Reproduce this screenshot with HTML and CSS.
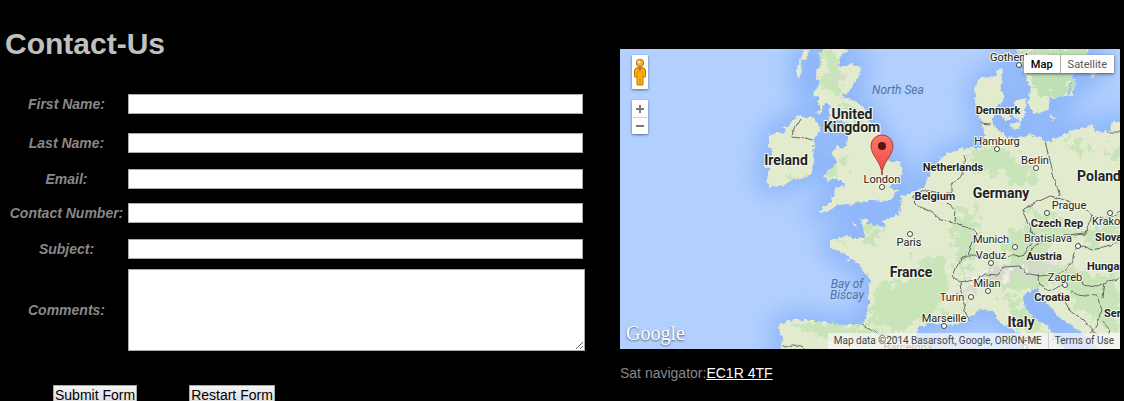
FILE: index.html
```html
<!DOCTYPE html>
<html lang="en">
<head>
<meta charset="utf-8">
<title>Contact-Us</title>
<link rel="stylesheet" href="styles.css">
</head>
<body>
<main class="page">
  <section class="contact">
    <h1 class="title">Contact-Us</h1>
    <form class="form">
      <div class="fields">
        <label class="label" for="first">First Name:</label><input class="field" id="first" type="text">
        <label class="label" for="last">Last Name:</label><input class="field" id="last" type="text">
        <label class="label" for="email">Email:</label><input class="field" id="email" type="email">
        <label class="label" for="phone">Contact Number:</label><input class="field" id="phone" type="tel">
        <label class="label" for="subject">Subject:</label><input class="field" id="subject" type="text">
        <label class="label" for="comments">Comments:</label><textarea class="field comments" id="comments"></textarea>
      </div>
      <div class="actions">
        <button class="button" type="submit">Submit Form</button>
        <button class="button" type="reset">Restart Form</button>
      </div>
    </form>
  </section>
  <section class="location">
    <div class="map">
      <svg class="canvas" viewBox="620 49 500 300" role="img" aria-label="Map of western Europe">
        <defs>
          <filter id="rough" x="-5%" y="-5%" width="110%" height="110%">
            <feTurbulence type="fractalNoise" baseFrequency="0.22" numOctaves="3" seed="4" result="n"/>
            <feDisplacementMap in="SourceGraphic" in2="n" scale="6" xChannelSelector="R" yChannelSelector="G"/>
          </filter>
          <filter id="bend" x="-5%" y="-5%" width="110%" height="110%">
            <feTurbulence type="fractalNoise" baseFrequency="0.12" numOctaves="2" seed="4" result="n"/>
            <feDisplacementMap in="SourceGraphic" in2="n" scale="5" xChannelSelector="R" yChannelSelector="G"/>
          </filter>
          <filter id="patchy" x="-10%" y="-10%" width="120%" height="120%">
            <feTurbulence type="fractalNoise" baseFrequency="0.09" numOctaves="4" seed="9" result="n"/>
            <feDisplacementMap in="SourceGraphic" in2="n" scale="30" xChannelSelector="R" yChannelSelector="G"/>
            <feGaussianBlur stdDeviation="0.6"/>
          </filter>
          <filter id="soft" x="-20%" y="-20%" width="140%" height="140%"><feGaussianBlur stdDeviation="11"/></filter>
          <linearGradient id="pin" x1="0" y1="0" x2="0" y2="1"><stop offset="0" stop-color="#ff776b"/><stop offset="1" stop-color="#e8463c"/></linearGradient>
          <g id="land">
            <path d="M828 45L818 55L822 62L815 72L820 82L813 95L819 98L819 110L815 114L821 112L826 103L831 104L828 119L834 122L843 120L848 135L847 148L838 147L832 153L837 162L832 169L823 175L828 181L840 179L845 186L835 187L832 199L826 206L818 212L827 213L837 205L853 204L870 200L890 201L898 190L888 188L894 184L903 172L901 163L888 160L886 146L880 132L870 122L865 108L852 100L840 97L848 93L858 78L862 67L852 64L840 67L838 60L848 49Z"/>
            <path d="M787 127L797 117L813 117L820 128L813 142L814 162L810 175L793 180L777 188L765 183L770 170L764 165L773 152L768 145L770 134L785 132L783 127Z"/>
            <path d="M803 50L809 50L806 59L801 61L802 72L799 79L797 68L801 59Z"/>
            <path d="M901 197L899 215L883 220L884 227L867 224L867 220L861 219L865 238L852 238L848 235L830 240L830 248L843 253L858 263L869 278L869 305L863 324L843 324L797 319L782 323L778 328L782 338L780 355L916 355L917 338L918 327L930 323L950 326L967 322L980 309L993 310L1000 323L1022 334L1032 355L1072 355L1053 338L1050 328L1033 318L1025 307L1023 295L1038 287L1042 298L1060 318L1083 333L1105 355L1130 355L1130 122L1112 122L1110 131L1095 132L1093 125L1073 130L1047 143L1038 137L1030 135L1020 138L1007 137L993 125L993 112L1005 97L1000 88L1003 77L1002 67L993 77L980 78L975 88L977 112L982 125L987 145L978 148L965 148L950 152L939 160L927 178L923 188L908 194Z"/>
            <path d="M1015 45L1022 65L1030 88L1028 105L1033 113L1047 112L1050 98L1067 97L1072 78L1082 65L1090 45Z"/>
            <path d="M1014 101L1026 98L1025 112L1022 121L1014 118ZM1002 112L1010 111L1011 120L1004 121ZM1009 124L1020 122L1019 128L1010 127ZM1050 115L1056 118L1052 121ZM1073 79L1076 78L1073 95L1069 97ZM1090 70L1096 65L1098 73L1092 78ZM853 223L857 223L857 228ZM846 259L850 260L848 262Z"/>
          </g>
          <mask id="shore" maskUnits="userSpaceOnUse" x="600" y="30" width="540" height="340"><use href="#land" fill="#fff"/></mask>
        </defs>
        <rect x="620" y="49" width="500" height="300" fill="#b2d0ff"/>
        <g filter="url(#soft)" stroke="#83aef8" stroke-width="18" fill="#83aef8" opacity=".75"><use href="#land"/></g>
        <g filter="url(#rough)">
          <use href="#land" fill="#e3ebcf"/>
          <g mask="url(#shore)">
            <g fill="#c9e4b9" filter="url(#patchy)">
              <path d="M820 50L843 55L838 90L825 98ZM843 98L862 110L858 126L843 118ZM827 159L842 158L842 174L830 175ZM865 225L882 228L883 245L868 245ZM834 241L850 242L848 250ZM872 290L900 282L930 260L952 278L945 310L900 330L872 325ZM905 254L912 252L910 262ZM920 263L945 256L949 280L930 287ZM965 150L1000 150L1035 170L1036 184L1005 178L975 168ZM952 215L978 205L975 255L957 275ZM1000 235L1030 225L1050 240L1045 265L1020 280ZM990 270L1045 260L1060 283L1020 291L990 283ZM1050 270L1120 275L1118 330L1090 320ZM1000 300L1018 296L1048 338L1030 336ZM785 322L860 325L905 338L850 343L810 332ZM1090 225L1120 215L1120 240L1080 244ZM1060 140L1090 142L1083 153ZM1100 148L1120 152L1120 164ZM1022 202L1055 220L1082 235L1040 238ZM780 175L796 173L783 184Z"/>
              <path fill="#bfe0b5" d="M1010 45L1090 45L1065 100L1035 90L1020 65Z"/>
            </g>
            <g fill="#d5d8cd" filter="url(#patchy)" opacity=".8"><path d="M836 74L850 73L849 84L838 82ZM962 276L990 268L1040 260L1065 266L1030 276L1000 280L970 295L966 315Z"/></g>
            <g fill="#f3f4e8" filter="url(#patchy)" opacity=".8"><path d="M966 275L985 272L982 278L965 290ZM1000 268L1022 266L1018 272L1000 275Z"/></g>
          </g>
        </g>
        <g class="borders" filter="url(#bend)">
          <path d="M801 119L793 132L792 137L801 138L805 137L812 139M981 123L991 124M1045 142L1050 160L1054 177L1060 196M965 155L963 175L952 184L952 193L940 193L925 190L913 197L918 206L930 211L941 220L950 221L956 223L977 232L969 256L960 259L953 276L961 283L963 300L966 314L970 321"/>
          <path d="M949 203L956 211L955 220M969 256L1000 257L1023 255L1028 248L1035 238L1022 210L1035 203L1050 196L1065 200L1078 206L1092 215L1085 233L1068 235L1055 238L1036 244L1030 252M961 283L973 280L986 274L998 275L1004 267L1020 266L1025 273L1040 276L1060 274L1070 265L1074 257L1077 244L1092 250L1112 246L1122 238M1038 274L1040 285L1051 291L1065 283L1078 272L1083 284L1098 286L1108 281L1122 278M1070 292L1084 295L1097 296L1102 310L1096 325L1090 334M1060 292L1069 309L1084 321L1098 336M1107 132L1122 132M1104 282L1102 297M863 325L880 333L902 341M782 346L795 345L807 350M1102 321L1110 330L1105 345M1092 215L1107 219L1122 210"/>
        </g>
        <g class="rings">
          <circle cx="882" cy="187" r="2.5"/><circle cx="910" cy="234" r="2.5"/><circle cx="1019" cy="65" r="2.5"/><circle cx="997" cy="149" r="2.5"/><circle cx="1036" cy="168" r="2.5"/><circle cx="1047" cy="213" r="2.5"/><circle cx="1110" cy="213" r="2.5"/><circle cx="1015" cy="247" r="2.5"/><circle cx="1078" cy="246" r="2.5"/><circle cx="991" cy="263" r="2.5"/><circle cx="988" cy="291" r="2.5"/><circle cx="971" cy="297" r="2.5"/><circle cx="1065" cy="285" r="2.5"/><circle cx="944" cy="326" r="2.5"/><circle cx="1025" cy="347" r="2.5"/>
        </g>
        <g class="sea"><text x="898" y="94">North Sea</text><text x="847" y="288">Bay of</text><text x="847" y="299">Biscay</text></g>
        <g class="nation">
          <text x="852" y="119">United</text><text x="852" y="132">Kingdom</text><text x="786" y="165">Ireland</text><text x="911" y="277">France</text><text x="1001" y="198">Germany</text><text x="1099" y="181">Poland</text><text x="1021" y="327">Italy</text>
        </g>
        <g class="country">
          <text x="998" y="114">Denmark</text><text x="953" y="171">Netherlands</text><text x="935" y="200">Belgium</text><text x="1057" y="227">Czech Rep</text><text x="1044" y="260">Austria</text><text x="1052" y="301">Croatia</text><text class="start" x="1095" y="241">Slovakia</text><text class="start" x="1087" y="270">Hungary</text><text class="start" x="1104" y="317">Serbia</text>
        </g>
        <g class="city">
          <text x="882" y="183">London</text><text x="909" y="246">Paris</text><text class="start" x="990" y="61">Gothenburg</text><text x="997" y="145">Hamburg</text><text x="1035" y="164">Berlin</text><text x="1069" y="209">Prague</text><text class="start" x="1092" y="225">Krakow</text><text x="991" y="243">Munich</text><text x="1048" y="242">Bratislava</text><text x="991" y="259">Vaduz</text><text x="987" y="287">Milan</text><text x="952" y="301">Turin</text><text x="1065" y="281">Zagreb</text><text x="944" y="322">Marseille</text><text x="908" y="351">Barcelona</text><text x="1025" y="343">Rome</text>
        </g>
        <path d="M882 175C882 162 871 156 871 146A11 11 0 0 1 893 146C893 156 882 162 882 175Z" fill="url(#pin)" stroke="#b83a32" stroke-width="1"/>
        <circle cx="882" cy="146" r="4" fill="#5c130f"/>
      </svg>
      <div class="controls">
        <button class="control pegman" type="button" aria-label="Street View">
          <svg class="figure" viewBox="0 0 14 28"><path d="M3 10H11L12.500 12V19H10V27H4V19H1.500V12Z" fill="#fbb404" stroke="#c47d08"/><path d="M4 9H10L7 14Z" fill="#e96b4c"/><circle cx="7" cy="5" r="3.700" fill="#f4b31a" stroke="#b77410"/><circle cx="6" cy="4" r="1.500" fill="#ffe39a"/><path d="M4 13V19M10 13V19M7 20V27" stroke="#d28a0c" fill="none"/></svg>
        </button>
        <div class="control zoom">
          <button class="step" type="button" aria-label="Zoom in"><svg class="sign" viewBox="0 0 8 8"><path d="M0 4H8M4 0V8"/></svg></button>
          <button class="step" type="button" aria-label="Zoom out"><svg class="sign" viewBox="0 0 8 8"><path d="M0 4H8"/></svg></button>
        </div>
      </div>
      <div class="types"><button class="type active" type="button">Map</button><button class="type" type="button">Satellite</button></div>
      <span class="logo">Google</span>
      <div class="credits"><span>Map data ©2014 Basarsoft, Google, ORION-ME</span><a class="terms" href="#terms">Terms of Use</a></div>
    </div>
    <p class="sat">Sat navigator:<a class="postcode" href="#map">EC1R 4TF</a></p>
  </section>
</main>
</body>
</html>
```
FILE: styles.css
```css
* { box-sizing: border-box; }
body { margin: 0; overflow: hidden; background: #000; color: #888; font: 14px "Liberation Sans", Arial, sans-serif; }
.page { display: grid; grid-template-columns: 615fr 500fr; padding: 0 4px 0 5px; }
.title { margin: 25px 0 21px; color: #c0c0c0; font-size: 30px; line-height: 37px; }
.contact { padding-right: 35px; }
.fields { display: grid; grid-template-columns: 123px 1fr; grid-template-rows: 42px 36px 36px 32px 40px 82px; align-items: center; }
.label { text-align: center; font-weight: bold; font-style: italic; white-space: nowrap; }
.field { height: 20px; margin: 0 2px 0 0; padding: 1px; border: 1px solid #a9a9a9; border-radius: 0; background: #fff; font: inherit; }
.comments { height: 82px; margin: 0; resize: both; }
.actions { display: flex; gap: 52px; padding: 34px 0 0 48px; }
.button { height: 20px; padding: 0 1px; border: 1px solid #a9a9a9; border-radius: 0; background: linear-gradient(#f4f4f4, #ddd); color: #000; font: 14px/18px "Liberation Sans", Arial, sans-serif; }
.location { padding-top: 49px; }
.map { position: relative; overflow: hidden; font-family: Roboto, Arial, sans-serif; }
.canvas { display: block; width: 100%; }
.borders { fill: none; stroke: #666965; stroke-width: 1; }
.rings { fill: #fff; stroke: #444; stroke-width: 1; }
.canvas text { text-anchor: middle; paint-order: stroke; stroke: #f5f7ec; stroke-width: 2px; stroke-linejoin: round; fill: #222; }
.canvas .start { text-anchor: start; }
.canvas .sea text { fill: #55739f; stroke: none; font-size: 12px; font-style: italic; }
.nation { font-size: 14px; font-weight: 700; }
.country { font-size: 11px; font-weight: 700; }
.city { font-size: 11px; }
.controls { position: absolute; top: 6px; left: 12px; display: grid; gap: 11px; }
.control { width: 16px; height: 34px; padding: 0; border: 0; border-radius: 1px; background: #fff; box-shadow: 0 1px 3px #53688c; }
.pegman { display: grid; place-items: center; }
.figure { width: 14px; height: 28px; }
.zoom { display: grid; grid-template-rows: 1fr 1fr; padding: 0 1px; }
.step { display: grid; place-items: center; padding: 0; border: 0; background: none; }
.step + .step { border-top: 1px solid #ccc; }
.sign { width: 8px; height: 8px; stroke: #777; stroke-width: 2; }
.types { position: absolute; top: 6px; right: 6px; display: flex; background: #fff; box-shadow: 0 1px 3px #555; }
.type { height: 18px; padding: 0 7px; border: 0; background: none; color: #565656; font: 11px Roboto, Arial, sans-serif; }
.active { border-right: 1px solid #aaa; color: #000; font-weight: 500; }
.logo { position: absolute; bottom: 4px; left: 6px; color: #fff; font: 20px/24px "Liberation Serif", serif; text-shadow: 0 1px 2px #456; }
.credits { position: absolute; right: 0; bottom: 0; display: flex; height: 16px; padding: 0 6px; background: rgba(245, 245, 245, .75); color: #444; font-size: 10px; line-height: 16px; white-space: nowrap; }
.terms { margin-left: 6px; padding-left: 6px; border-left: 1px solid #ccd; color: #444; text-decoration: none; }
.sat { margin: 16px 0 0; line-height: 16px; }
.postcode { color: #fff; }
```
